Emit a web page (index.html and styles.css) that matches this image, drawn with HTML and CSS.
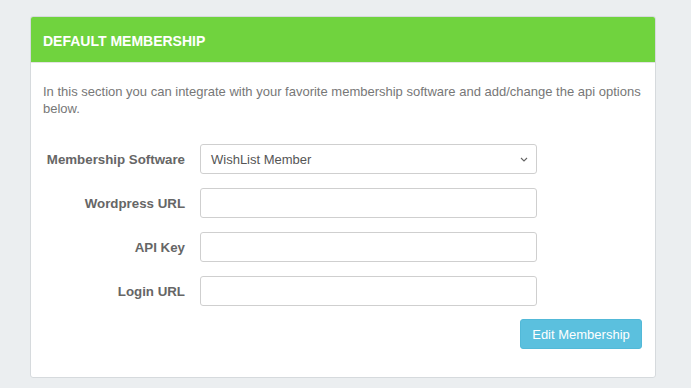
FILE: index.html
```html
<!DOCTYPE html>
<html>
<head>
<meta charset="utf-8">
<link rel="stylesheet" href="styles.css">
</head>
<body>
<div class="panel">
  <div class="panel-heading">DEFAULT MEMBERSHIP</div>
  <div class="panel-body">
    <p class="intro">In this section you can integrate with your favorite membership software and add/change the api options below.</p>
    <form class="form">
      <div class="row">
        <label class="label">Membership Software</label>
        <div class="select">
          <span>WishList Member</span>
          <svg class="chev" width="8" height="5" viewBox="0 0 8 5"><path d="M1 1 L4 4 L7 1" fill="none" stroke="#666" stroke-width="1.1"/></svg>
        </div>
      </div>
      <div class="row">
        <label class="label">Wordpress URL</label>
        <div class="input"></div>
      </div>
      <div class="row">
        <label class="label">API Key</label>
        <div class="input"></div>
      </div>
      <div class="row last">
        <label class="label">Login URL</label>
        <div class="input"></div>
      </div>
      <div class="actions">
        <button type="button" class="btn">Edit Membership</button>
      </div>
    </form>
  </div>
</div>
</body>
</html>
```
FILE: styles.css
```css
html, body {
  margin: 0;
  padding: 0;
  background: #ebeef0;
  font-family: "Liberation Sans", Arial, sans-serif;
}
body {
  padding: 16px 0 0 30px;
}
.panel {
  width: 624px;
  background: #fff;
  border: 1px solid #d6dadd;
  border-radius: 3px;
  overflow: hidden;
}
.panel-heading {
  background: #70d33e;
  color: #fff;
  font-weight: bold;
  font-size: 14px;
  height: 45px;
  line-height: 49px;
  padding-left: 12px;
  border-bottom: 1px solid #e3e3e3;
}
.panel-body {
  padding: 20px 13px 28px 12px;
}
.intro {
  margin: 0;
  font-size: 13px;
  line-height: 17px;
  color: #777;
}
.form {
  margin-top: 27px;
}
.row {
  display: flex;
  align-items: center;
  margin-bottom: 14px;
}
.row.last {
  margin-bottom: 13px;
}
.label {
  width: 142px;
  margin-right: 15px;
  text-align: right;
  font-weight: bold;
  font-size: 13.3px;
  color: #666;
}
.select, .input {
  box-sizing: border-box;
  width: 337px;
  height: 30px;
  border: 1px solid #cfcfcf;
  border-radius: 3px;
  background: #fff;
}
.select {
  display: flex;
  align-items: center;
  justify-content: space-between;
  padding: 0 8px 0 10px;
  font-size: 13px;
  color: #555;
}
.chev {
  display: block;
}
.actions {
  display: flex;
  justify-content: flex-end;
}
.btn {
  width: 122px;
  height: 30px;
  border: 1px solid #52b9d8;
  border-radius: 3px;
  background: #5bc0de;
  color: #fff;
  font-family: "Liberation Sans", Arial, sans-serif;
  font-size: 13px;
  padding: 0;
}
```
